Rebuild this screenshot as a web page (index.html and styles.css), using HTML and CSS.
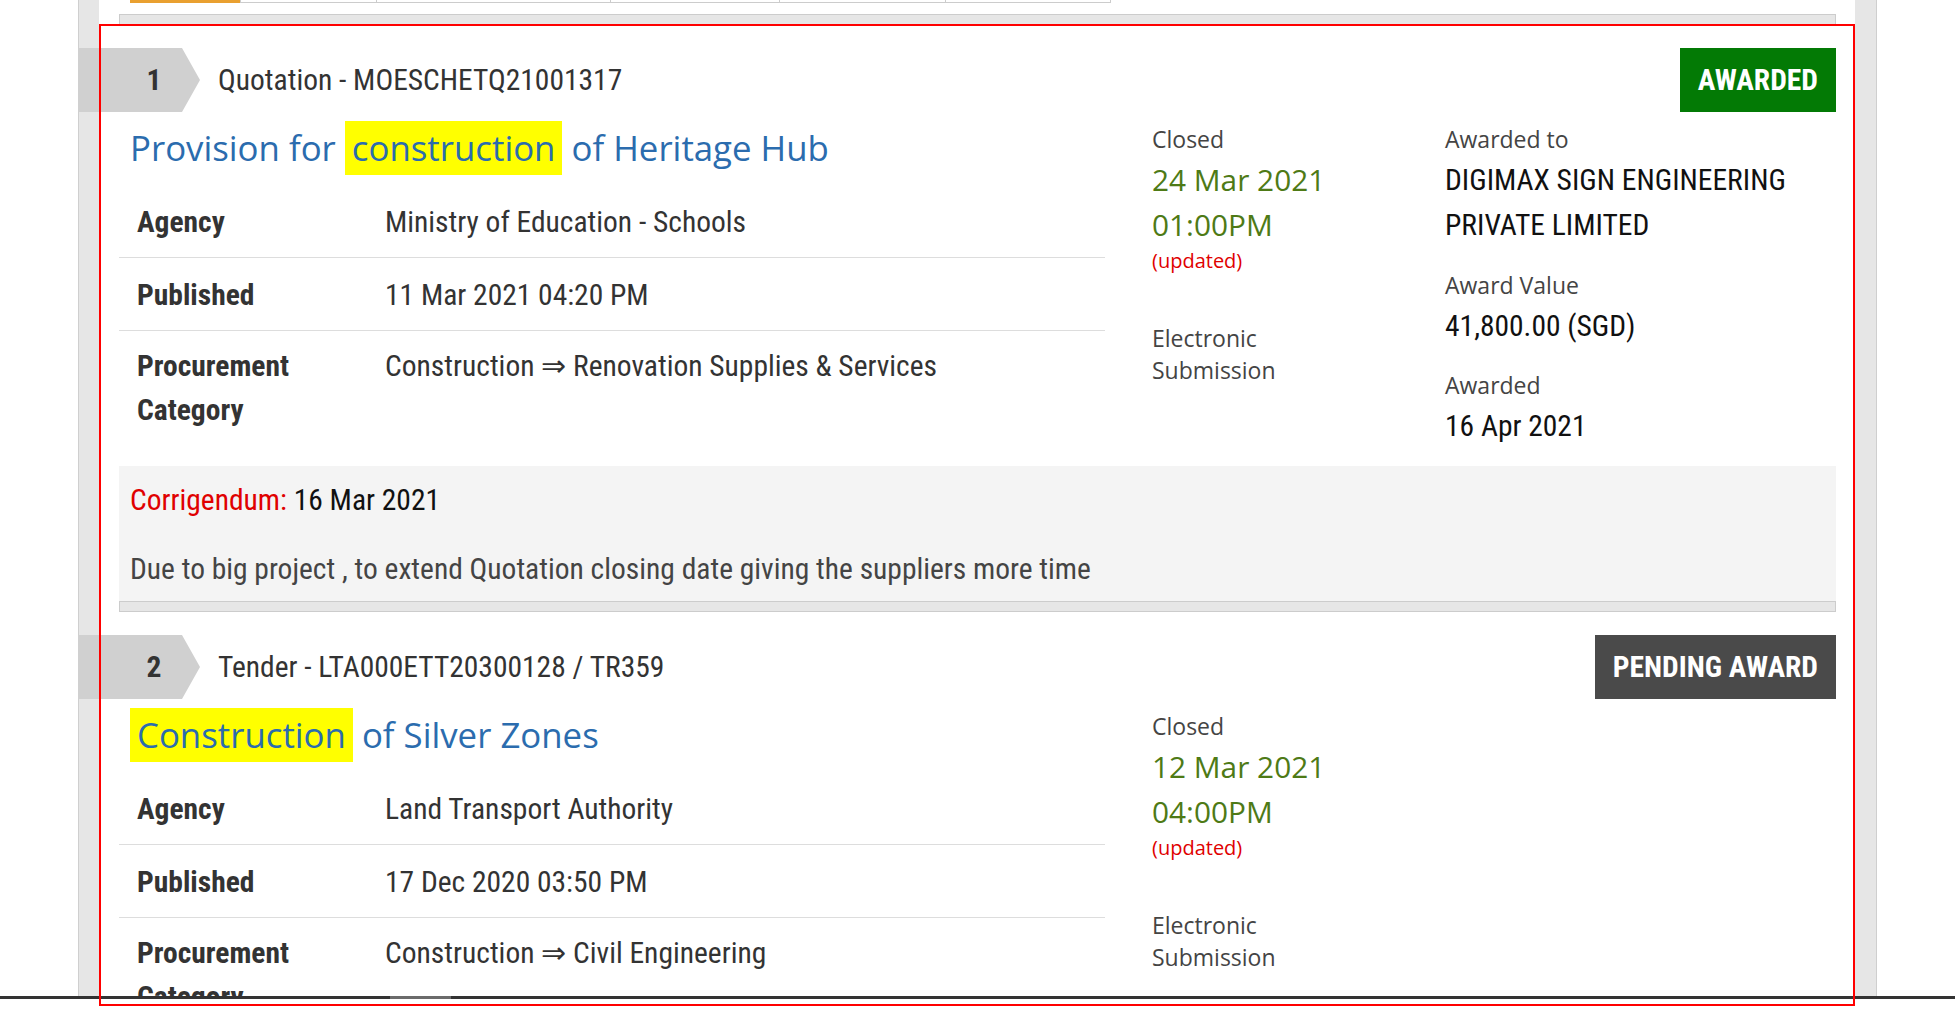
FILE: index.html
```html
<!DOCTYPE html>
<html>
<head>
<meta charset="utf-8">
<title>Search results</title>
<link rel="stylesheet" href="styles.css">
</head>
<body>
<div class="viewport">
  <div class="page">
    <div class="panel">
      <div class="tabs">
        <div class="tab tab-active"></div>
        <div class="tab w136"></div>
        <div class="tab w234"></div>
        <div class="tab w169"></div>
        <div class="tab w166"></div>
        <div class="tab w165"></div>
      </div>
      <div class="sep sep-top"></div>

      <div class="item">
        <div class="head">
          <div class="num">1</div>
          <div class="ref">Quotation - MOESCHETQ21001317</div>
          <div class="badge badge-awarded">AWARDED</div>
        </div>
        <div class="body">
          <div class="main">
            <div class="title">Provision for <span class="hl">construction</span> of Heritage Hub</div>
            <div class="table">
              <div class="row"><div class="lbl">Agency</div><div class="val">Ministry of Education - Schools</div></div>
              <div class="row"><div class="lbl">Published</div><div class="val">11 Mar 2021 04:20 PM</div></div>
              <div class="row"><div class="lbl">Procurement<br>Category</div><div class="val">Construction ⇒ Renovation Supplies &amp; Services</div></div>
            </div>
          </div>
          <div class="side">
            <div class="s-label">Closed</div>
            <div class="s-date">24 Mar 2021<br>01:00PM</div>
            <div class="s-updated">(updated)</div>
            <div class="s-label s-sub">Electronic<br>Submission</div>
          </div>
          <div class="side">
            <div class="s-label">Awarded to</div>
            <div class="s-val">DIGIMAX SIGN ENGINEERING PRIVATE LIMITED</div>
            <div class="s-label s-gap">Award Value</div>
            <div class="s-val">41,800.00 (SGD)</div>
            <div class="s-label s-gap2">Awarded</div>
            <div class="s-val">16 Apr 2021</div>
          </div>
        </div>
        <div class="corr">
          <p class="corr-line"><span class="corr-key">Corrigendum:</span> <span class="corr-date">16 Mar 2021</span></p>
          <p class="corr-desc">Due to big project , to extend Quotation closing date giving the suppliers more time</p>
        </div>
        <div class="sep"></div>
      </div>

      <div class="item">
        <div class="head">
          <div class="num">2</div>
          <div class="ref">Tender - LTA000ETT20300128 / TR359</div>
          <div class="badge badge-pending">PENDING AWARD</div>
        </div>
        <div class="body">
          <div class="main">
            <div class="title"><span class="hl">Construction</span> of Silver Zones</div>
            <div class="table">
              <div class="row"><div class="lbl">Agency</div><div class="val">Land Transport Authority</div></div>
              <div class="row"><div class="lbl">Published</div><div class="val">17 Dec 2020 03:50 PM</div></div>
              <div class="row"><div class="lbl">Procurement<br>Category</div><div class="val">Construction ⇒ Civil Engineering</div></div>
            </div>
          </div>
          <div class="side">
            <div class="s-label">Closed</div>
            <div class="s-date">12 Mar 2021<br>04:00PM</div>
            <div class="s-updated">(updated)</div>
            <div class="s-label s-sub">Electronic<br>Submission</div>
          </div>
          <div class="side"></div>
        </div>
      </div>
    </div>
  </div>
</div>
<div class="hscroll"><div class="thumb"></div></div>
<div class="outline"></div>
</body>
</html>
```

FILE: styles.css
```css
* { box-sizing: border-box; }

body {
  margin: 0;
  background: #fff;
  font-family: "Roboto Condensed", Roboto, "Liberation Sans", sans-serif;
  font-stretch: condensed;
  font-size: 29.5px;
  color: #333;
}

.viewport {
  height: 996px;
  overflow: hidden;
}

.page {
  margin-left: 78px;
  width: 1799px;
  min-height: 996px;
  background: #e6e6e6;
  border-left: 1px solid #cfcfcf;
  border-right: 1px solid #cfcfcf;
  padding: 0 21px 0 20px;
}

.panel {
  background: #fff;
  min-height: 996px;
  padding: 0 19px 0 20px;
}

/* top tab strip (cut off) */
.tabs {
  display: flex;
  margin-left: 11px;
  height: 3px;
}
.tab {
  width: 136px;
  height: 3px;
  border-bottom: 1px solid #cccccc;
  border-right: 1px solid #cccccc;
}
.tab-active {
  width: 111px;
  background: #e9a030;
  border-bottom: 0;
  border-right: 1px solid #cccccc;
}
.w136 { width: 136px; }
.w234 { width: 234px; }
.w169 { width: 169px; }
.w166 { width: 166px; }
.w165 { width: 165px; }

.sep {
  height: 11px;
  background: #e6e6e6;
  border: 1px solid #cccccc;
}
.sep-top {
  margin-top: 11px;
}

.item {
  padding-top: 23px;
}

.head {
  display: flex;
  align-items: center;
  height: 64px;
}

.num {
  margin-left: -41px;
  width: 122px;
  height: 64px;
  padding-left: 30px;
  display: flex;
  align-items: center;
  justify-content: center;
  background: #d0d0d0;
  clip-path: polygon(0 0, 104px 0, 122px 32px, 104px 64px, 0 64px);
  font-weight: 700;
  color: #333;
}

.ref {
  margin-left: 18px;
  color: #333;
}

.badge {
  margin-left: auto;
  height: 64px;
  line-height: 64px;
  padding: 0 18px 0 18px;
  color: #fff;
  font-weight: 700;
}
.badge-awarded { background: #037a05; }
.badge-pending { background: #4a4a4a; }

.body {
  display: grid;
  grid-template-columns: 1033px 293px 1fr;
  margin-top: 9px;
}

.main {
  padding-right: 47px;
}

.title {
  font-family: "Open Sans", "Noto Sans", sans-serif;
  font-stretch: normal;
  font-size: 34.8px;
  line-height: 54px;
  color: #2b6cae;
  padding-left: 11px;
  white-space: nowrap;
}
.hl {
  display: inline-block;
  background: #ffff00;
  padding: 0 7px;
}

.table {
  margin-top: 10px;
}
.row {
  display: flex;
  padding: 15px 0 13px 18px;
  line-height: 44px;
  border-bottom: 1px solid #dddddd;
}
.row:last-child {
  padding-top: 14px;
  line-height: 43.5px;
  border-bottom: 0;
}
.lbl {
  width: 248px;
  flex: none;
  font-weight: 700;
  color: #333;
}
.val {
  color: #333;
}

.side {
  margin-top: 2px;
  font-family: "Open Sans", "Noto Sans", sans-serif;
  font-stretch: normal;
}
.s-label {
  font-size: 23px;
  line-height: 32px;
  color: #444;
}
.s-date {
  margin-top: 2px;
  font-size: 29.8px;
  line-height: 45px;
  color: #4e7a16;
}
.s-updated {
  margin-top: 0;
  font-size: 20px;
  line-height: 28px;
  color: #e00000;
}
.s-sub {
  margin-top: 47px;
}
.s-val {
  margin-top: 3px;
  font-family: "Roboto Condensed", Roboto, sans-serif;
  font-stretch: condensed;
  font-size: 29.5px;
  line-height: 45px;
  color: #111;
}
.s-gap { margin-top: 21px; }
.s-gap2 { margin-top: 20px; }

.corr {
  margin-top: 17px;
  background: #f4f4f4;
  padding: 12px 11px 10px;
}
.corr p {
  margin: 0;
  line-height: 44px;
}
.corr-desc {
  margin-top: 25px !important;
  color: #444;
}
.corr-key { color: #e00000; }
.corr-date { color: #111; }

.hscroll {
  height: 3px;
  background: #333;
  padding-left: 390px;
}
.thumb {
  width: 61px;
  height: 3px;
  background: #6b6b6b;
}

.outline {
  position: absolute;
  left: 99px;
  top: 24px;
  width: 1756px;
  height: 982px;
  border: 2px solid #ff0000;
  pointer-events: none;
}
```
